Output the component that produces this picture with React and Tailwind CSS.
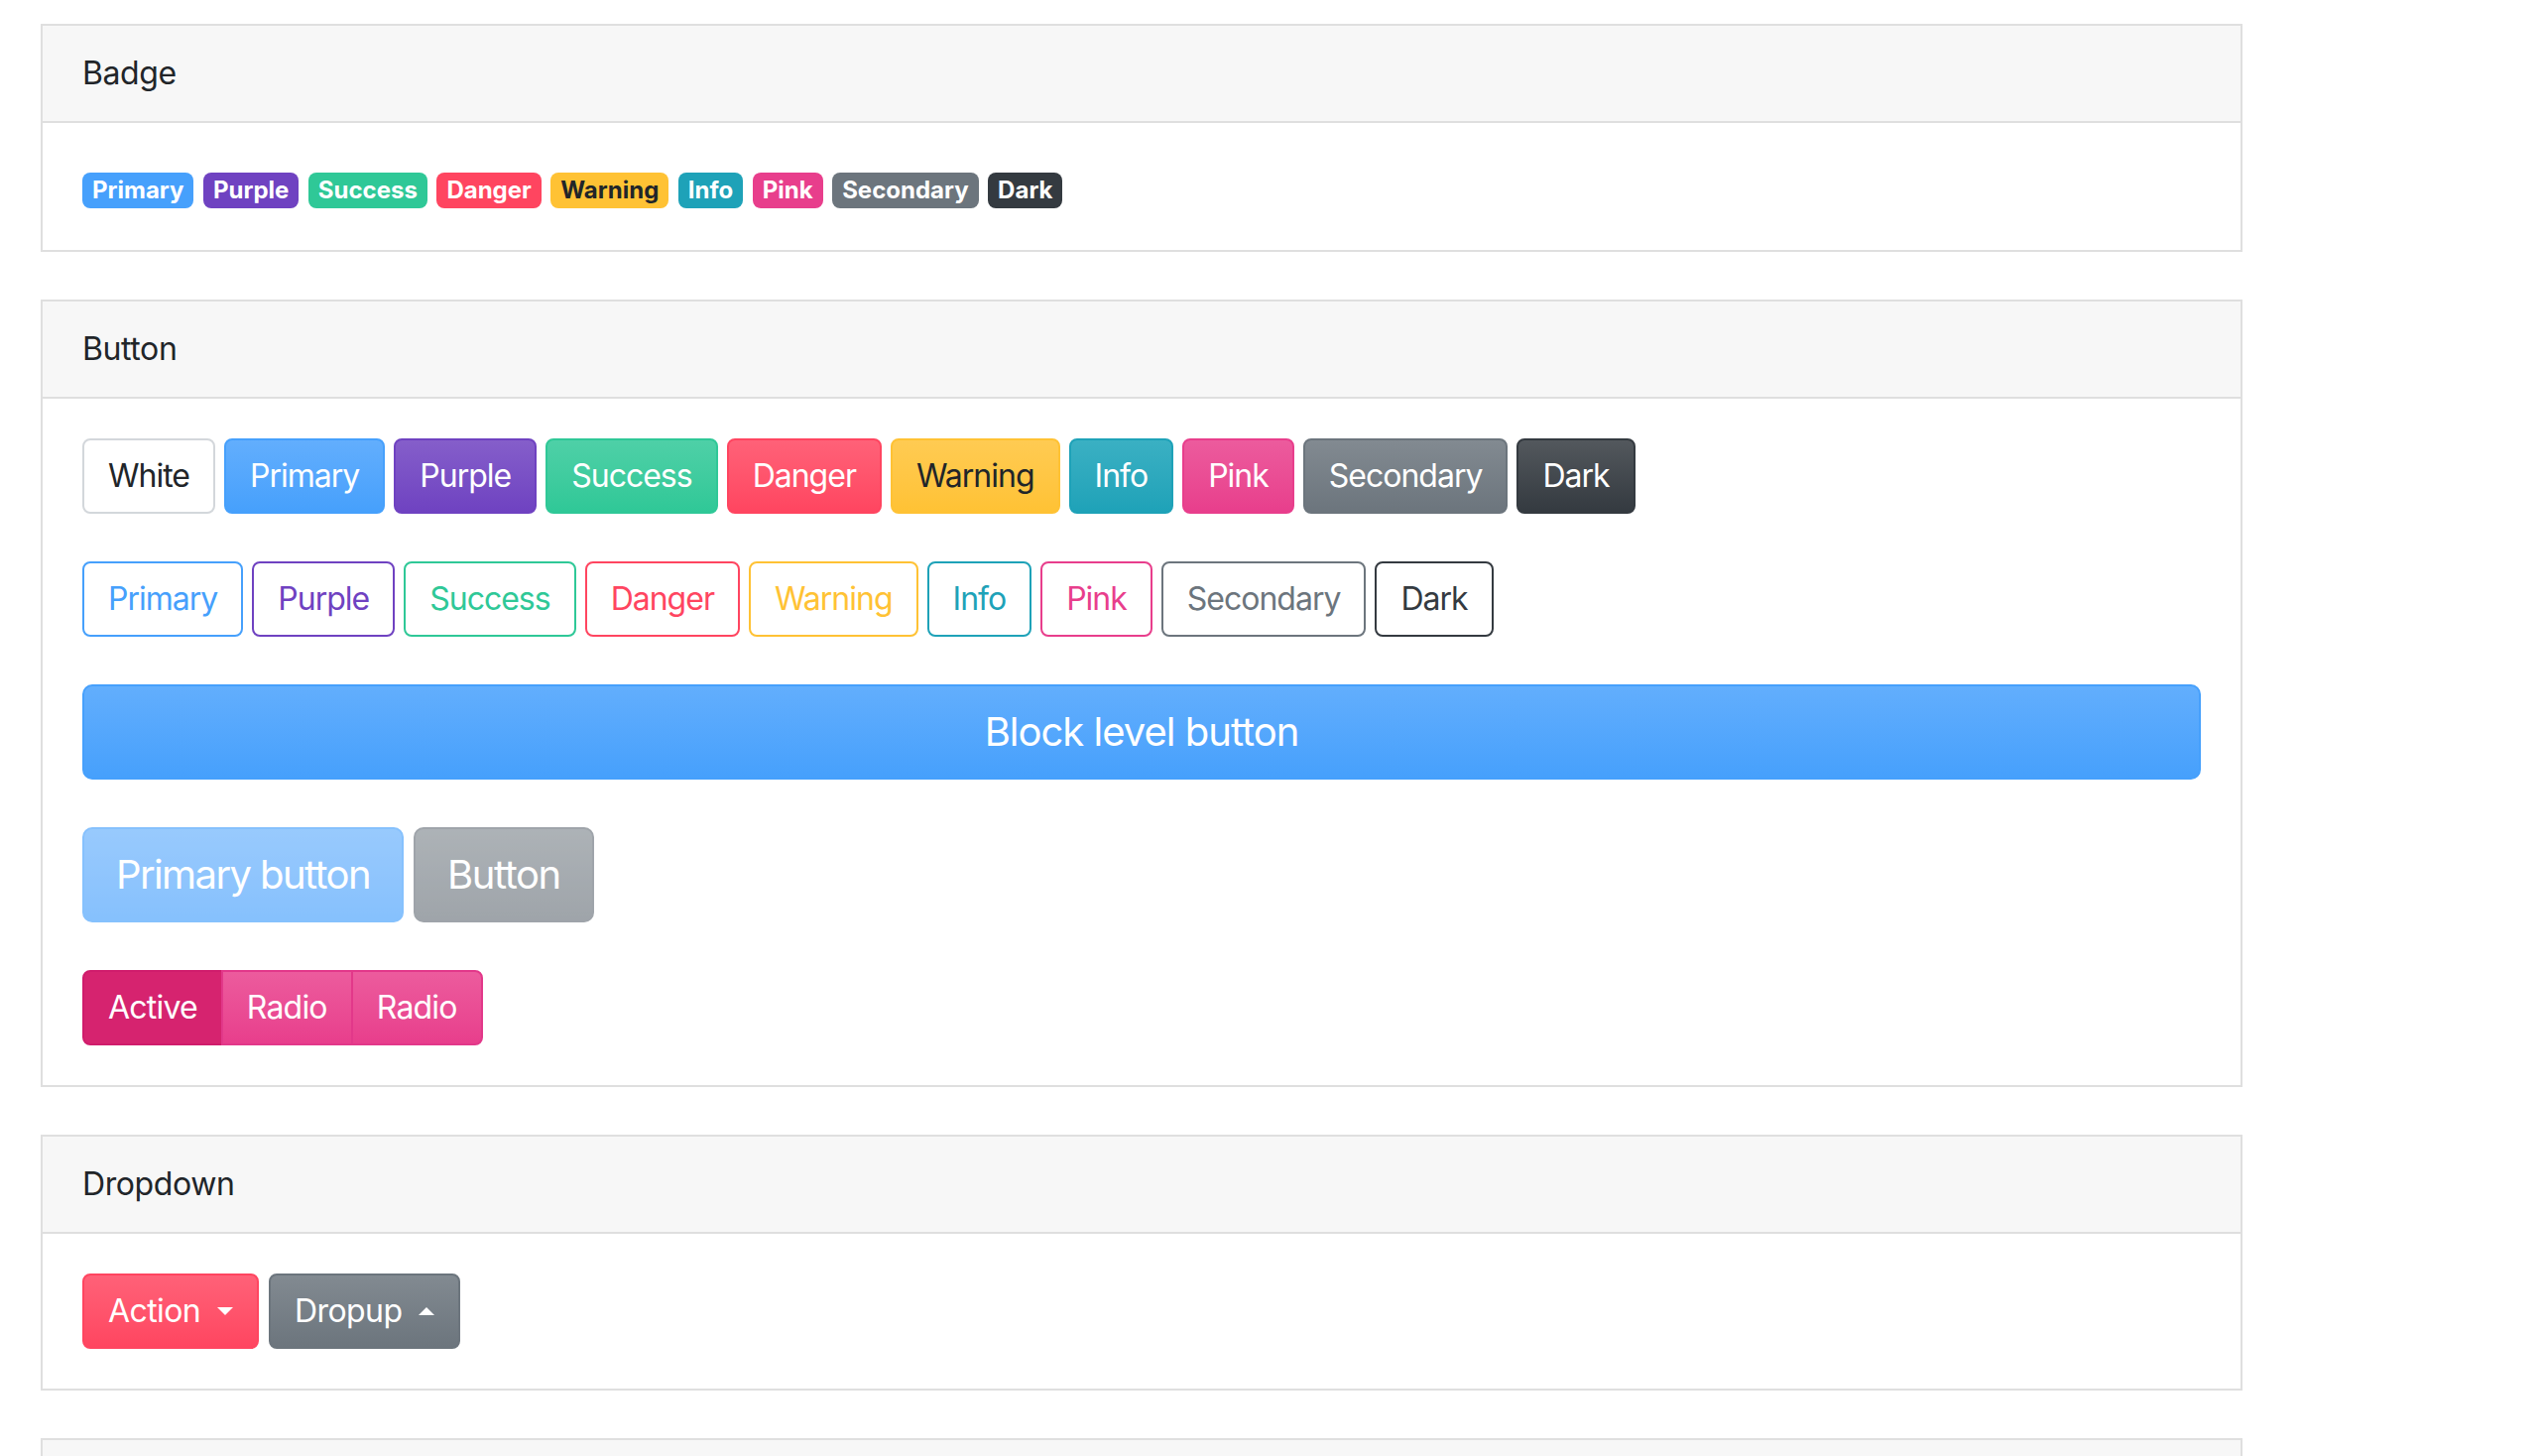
import React from "react";

// palette (bootstrap-ish, rendered at 2x)
const BADGES = [
  { label: "Primary", cls: "bg-[#46a0fc] text-white" },
  { label: "Purple", cls: "bg-[#6f42c1] text-white" },
  { label: "Success", cls: "bg-[#2fc897] text-white" },
  { label: "Danger", cls: "bg-[#ff4560] text-white" },
  { label: "Warning", cls: "bg-[#ffc234] text-[#212529]" },
  { label: "Info", cls: "bg-[#1ea2b8] text-white" },
  { label: "Pink", cls: "bg-[#e83e8c] text-white" },
  { label: "Secondary", cls: "bg-[#6c757d] text-white" },
  { label: "Dark", cls: "bg-[#343a40] text-white" },
];

const SOLID = [
  { label: "White", cls: "bg-white border-[#d3d7db] text-[#212529]" },
  { label: "Primary", cls: "bg-linear-to-b from-[#62aefd] to-[#46a0fc] border-[#46a0fc] text-white" },
  { label: "Purple", cls: "bg-linear-to-b from-[#855eca] to-[#6f42c1] border-[#6f42c1] text-white" },
  { label: "Success", cls: "bg-linear-to-b from-[#4ed0a7] to-[#2fc897] border-[#2fc897] text-white" },
  { label: "Danger", cls: "bg-linear-to-b from-[#ff6178] to-[#ff4560] border-[#ff4560] text-white" },
  { label: "Warning", cls: "bg-linear-to-b from-[#ffcb52] to-[#ffc234] border-[#ffc234] text-[#212529]" },
  { label: "Info", cls: "bg-linear-to-b from-[#3ab0c3] to-[#1ea2b8] border-[#1ea2b8] text-white" },
  { label: "Pink", cls: "bg-linear-to-b from-[#ec5b9d] to-[#e83e8c] border-[#e83e8c] text-white" },
  { label: "Secondary", cls: "bg-linear-to-b from-[#828a91] to-[#6c757d] border-[#6c757d] text-white" },
  { label: "Dark", cls: "bg-linear-to-b from-[#53585d] to-[#343a40] border-[#343a40] text-white" },
];

const OUTLINE = [
  { label: "Primary", cls: "border-[#46a0fc] text-[#46a0fc]" },
  { label: "Purple", cls: "border-[#6f42c1] text-[#6f42c1]" },
  { label: "Success", cls: "border-[#2fc897] text-[#2fc897]" },
  { label: "Danger", cls: "border-[#ff4560] text-[#ff4560]" },
  { label: "Warning", cls: "border-[#ffc234] text-[#ffc234]" },
  { label: "Info", cls: "border-[#1ea2b8] text-[#1ea2b8]" },
  { label: "Pink", cls: "border-[#e83e8c] text-[#e83e8c]" },
  { label: "Secondary", cls: "border-[#6c757d] text-[#6c757d]" },
  { label: "Dark", cls: "border-[#343a40] text-[#343a40]" },
];

function Card({ title, children }) {
  return (
    <div className="w-[2220px] border-2 border-[#dfdfdf] bg-white mb-[48px]">
      <div className="h-[98px] bg-[#f7f7f7] border-b-2 border-[#dfdfdf] px-[40px] flex items-center text-[32px] tracking-[-0.4px] text-[#212529]">
        {title}
      </div>
      {children && <div className="p-[40px]">{children}</div>}
    </div>
  );
}

function Btn({ cls, children }) {
  return (
    <button className={"h-[76px] px-[24px] border-2 rounded-[8px] text-[32px] leading-none flex items-center " + cls}>
      {children}
    </button>
  );
}

function Caret({ up }) {
  return up ? (
    <span className="ml-[17px] inline-block w-0 h-0 border-l-[8px] border-r-[8px] border-b-[8px] border-l-transparent border-r-transparent border-b-white" />
  ) : (
    <span className="ml-[17px] inline-block w-0 h-0 border-l-[8px] border-r-[8px] border-t-[8px] border-l-transparent border-r-transparent border-t-white" />
  );
}

export default function App() {
  return (
    <div className="min-h-screen bg-white pt-[24px] pl-[41px] font-['Inter',sans-serif] antialiased">
      <Card title="Badge">
        <div className="h-[48px] flex items-start pt-[10px] gap-[9.5px]">
          {BADGES.map(b => (
            <span key={b.label} className={"h-[36px] px-[10px] rounded-[8px] text-[24px] font-bold leading-none flex items-center " + b.cls}>
              {b.label}
            </span>
          ))}
        </div>
      </Card>

      <Card title="Button">
        <div className="flex flex-col gap-[48px]">
          <div className="flex gap-[9px] tracking-[-1px]">
            {SOLID.map(b => <Btn key={b.label} cls={b.cls}>{b.label}</Btn>)}
          </div>
          <div className="flex gap-[9px] tracking-[-1px]">
            {OUTLINE.map(b => <Btn key={b.label} cls={"bg-white " + b.cls}>{b.label}</Btn>)}
          </div>
          <button className="h-[96px] w-full rounded-[10px] border-2 border-[#46a0fc] bg-linear-to-b from-[#62aefd] to-[#46a0fc] text-white text-[40px] tracking-[-1px] leading-none">
            Block level button
          </button>
          <div className="flex gap-[10px]">
            <button className="h-[96px] px-[32px] rounded-[10px] border-2 border-[#46a0fc] bg-linear-to-b from-[#62aefd] to-[#46a0fc] text-white text-[40px] tracking-[-1.6px] leading-none opacity-65">
              Primary button
            </button>
            <button className="h-[96px] px-[32px] rounded-[10px] border-2 border-[#6c757d] bg-linear-to-b from-[#828a91] to-[#6c757d] text-white text-[40px] tracking-[-1.4px] leading-none opacity-65">
              Button
            </button>
          </div>
          <div className="flex text-[32px] tracking-[-0.8px] leading-none text-white">
            <button className="h-[76px] px-[24px] rounded-l-[8px] border-2 border-[#d01c6c] bg-[#d6236f]">
              Active
            </button>
            <button className="h-[76px] px-[24px] -ml-[2px] border-2 border-[#e2388a] bg-linear-to-b from-[#ec5b9d] to-[#e83e8c]">
              Radio
            </button>
            <button className="h-[76px] px-[24px] -ml-[2px] rounded-r-[8px] border-2 border-[#e2388a] bg-linear-to-b from-[#ec5b9d] to-[#e83e8c]">
              Radio
            </button>
          </div>
        </div>
      </Card>

      <Card title="Dropdown">
        <div className="flex gap-[10px] tracking-[-0.6px]">
          <Btn cls="bg-linear-to-b from-[#ff6178] to-[#ff4560] border-[#ff4560] text-white">
            Action
            <Caret />
          </Btn>
          <Btn cls="bg-linear-to-b from-[#828a91] to-[#6c757d] border-[#6c757d] text-white">
            Dropup
            <Caret up />
          </Btn>
        </div>
      </Card>

      <Card title="">
        <div className="h-[48px]" />
      </Card>
    </div>
  );
}
